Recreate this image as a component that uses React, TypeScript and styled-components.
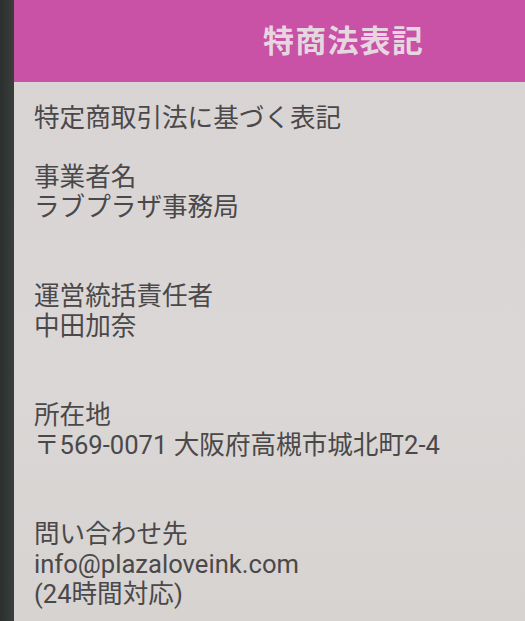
import React from "react";
import styled, { createGlobalStyle } from "styled-components";

const GlobalStyle = createGlobalStyle`
  html, body {
    margin: 0;
    padding: 0;
    background: #2f3432;
  }
  body {
    font-family: Roboto, "Noto Sans CJK JP", sans-serif;
  }
`;

const Screen = styled.div`
  display: flex;
  width: 525px;
  height: 621px;
  overflow: hidden;
`;

const Bezel = styled.div`
  width: 14px;
  flex-shrink: 0;
  background: linear-gradient(90deg, #2b2f2e, #3a3e3d);
`;

const Page = styled.div`
  flex: 1;
  display: flex;
  flex-direction: column;
  background: linear-gradient(180deg, #d8d3d4 0%, #dad7d6 60%, #d6d3d1 100%);
`;

const Header = styled.header`
  height: 82px;
  flex-shrink: 0;
  display: flex;
  align-items: center;
  justify-content: center;
  padding-left: 148px;
  background: #c951a6;
`;

const Title = styled.h1`
  margin: 0;
  font-family: "Noto Sans CJK JP", sans-serif;
  font-size: 31px;
  font-weight: 700;
  color: #e6d6e0;
  letter-spacing: 1.2px;
  line-height: 1;
  padding-bottom: 6px;
`;

const Content = styled.main`
  padding: 21px 0 0 20px;
  color: #4b4849;
  font-size: 25.6px;
  line-height: 30px;
`;

const Block = styled.section<{ $gap: number }>`
  margin-top: ${(p) => p.$gap}px;
`;

const Line = styled.div`
  white-space: nowrap;
`;

const sections = [
  { label: "事業者名", lines: ["ラブプラザ事務局"] },
  { label: "運営統括責任者", lines: ["中田加奈"] },
  { label: "所在地", lines: ["〒569-0071 大阪府高槻市城北町2-4"] },
  { label: "問い合わせ先", lines: ["info@plazaloveink.com", "(24時間対応)"] },
];

export default function App() {
  return (
    <>
      <GlobalStyle />
      <Screen>
        <Bezel />
        <Page>
          <Header>
            <Title>特商法表記</Title>
          </Header>
          <Content>
            <Line>特定商取引法に基づく表記</Line>
            {sections.map((s, i) => (
              <Block key={s.label} $gap={i === 0 ? 29 : 59}>
                <Line>{s.label}</Line>
                {s.lines.map((l) => (
                  <Line key={l}>{l}</Line>
                ))}
              </Block>
            ))}
          </Content>
        </Page>
      </Screen>
    </>
  );
}
